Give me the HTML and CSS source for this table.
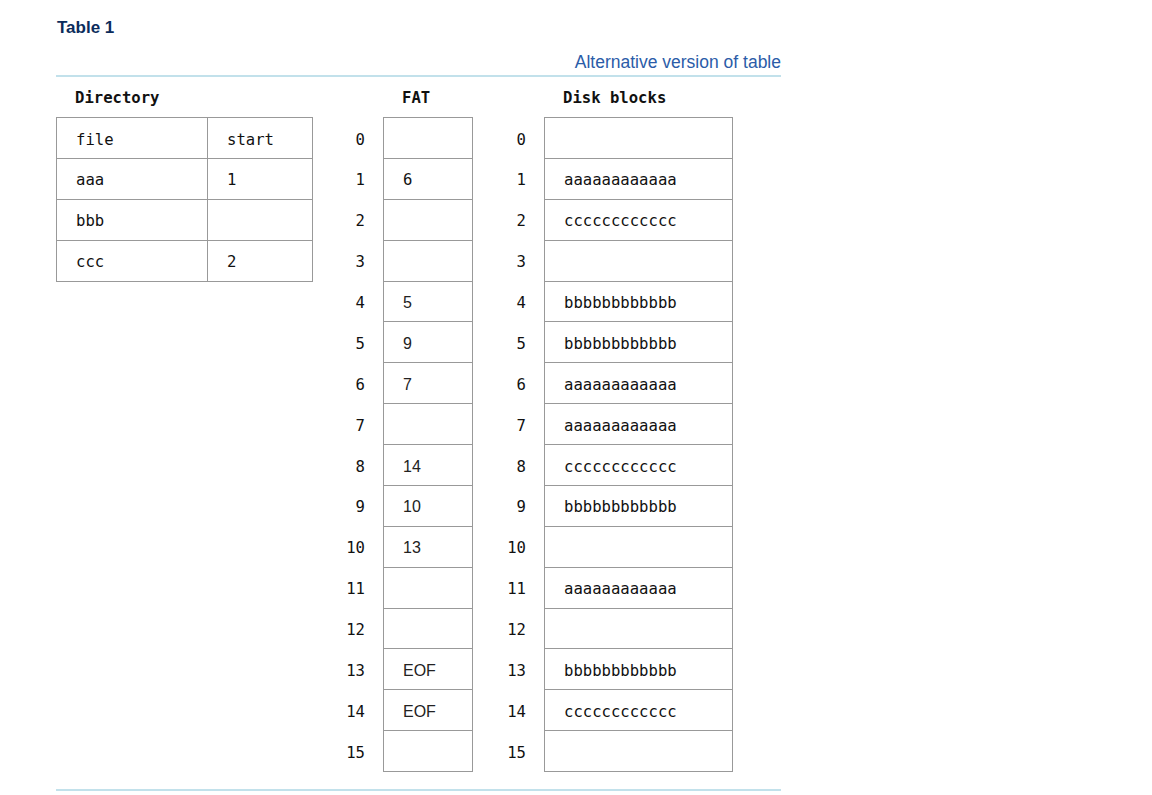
FILE: index.html
```html
<!DOCTYPE html>
<html lang="en">
<head>
<meta charset="utf-8">
<title>Table 1</title>
<link rel="stylesheet" href="styles.css">
</head>
<body>
<div class="wrap">
  <h2 class="title">Table 1</h2>
  <div class="alt"><a href="#" class="alt-link">Alternative version of table</a></div>
  <div class="figure">
    <div class="dir">
      <div class="hd span2">Directory</div>
      <div class="c b1 top first">file</div><div class="c b2 top">start</div>
      <div class="c b1 first">aaa</div><div class="c b2">1</div>
      <div class="c b1 first">bbb</div><div class="c b2"></div>
      <div class="c b1 first">ccc</div><div class="c b2">2</div>
    </div>
    <div class="fat">
      <div class="hd"></div><div class="hd">FAT</div>
      <div class="i top">0</div><div class="v top"></div>
      <div class="i">1</div><div class="v">6</div>
      <div class="i">2</div><div class="v"></div>
      <div class="i">3</div><div class="v"></div>
      <div class="i">4</div><div class="v sans">5</div>
      <div class="i">5</div><div class="v sans">9</div>
      <div class="i">6</div><div class="v sans">7</div>
      <div class="i">7</div><div class="v"></div>
      <div class="i">8</div><div class="v sans">14</div>
      <div class="i">9</div><div class="v sans">10</div>
      <div class="i">10</div><div class="v sans">13</div>
      <div class="i">11</div><div class="v"></div>
      <div class="i">12</div><div class="v"></div>
      <div class="i">13</div><div class="v sans">EOF</div>
      <div class="i">14</div><div class="v sans">EOF</div>
      <div class="i">15</div><div class="v"></div>
    </div>
    <div class="disk">
      <div class="hd"></div><div class="hd">Disk blocks</div>
      <div class="i top">0</div><div class="v top"></div>
      <div class="i">1</div><div class="v">aaaaaaaaaaaa</div>
      <div class="i">2</div><div class="v">cccccccccccc</div>
      <div class="i">3</div><div class="v"></div>
      <div class="i">4</div><div class="v">bbbbbbbbbbbb</div>
      <div class="i">5</div><div class="v">bbbbbbbbbbbb</div>
      <div class="i">6</div><div class="v">aaaaaaaaaaaa</div>
      <div class="i">7</div><div class="v">aaaaaaaaaaaa</div>
      <div class="i">8</div><div class="v">cccccccccccc</div>
      <div class="i">9</div><div class="v">bbbbbbbbbbbb</div>
      <div class="i">10</div><div class="v"></div>
      <div class="i">11</div><div class="v">aaaaaaaaaaaa</div>
      <div class="i">12</div><div class="v"></div>
      <div class="i">13</div><div class="v">bbbbbbbbbbbb</div>
      <div class="i">14</div><div class="v">cccccccccccc</div>
      <div class="i">15</div><div class="v"></div>
    </div>
  </div>
</div>
</body>
</html>
```

FILE: styles.css
```css
html, body {
  margin: 0;
  padding: 0;
  background: #ffffff;
}

body {
  font-family: "Liberation Sans", Arial, sans-serif;
  font-size: 16px;
  color: #222222;
}

.wrap {
  margin-left: 56px;
  width: 725px;
  padding-top: 19px;
}

.title {
  margin: 0;
  padding-left: 1px;
  font-size: 17px;
  line-height: 18px;
  font-weight: bold;
  color: #0b2c5c;
}

.alt {
  margin-top: 15px;
  text-align: right;
  font-size: 17.5px;
  line-height: 20px;
  padding-bottom: 3px;
  border-bottom: 2px solid #c2e1eb;
}

.alt-link {
  color: #2b5ca8;
  text-decoration: none;
}

.figure {
  display: flex;
  align-items: flex-start;
  padding-bottom: 17px;
  border-bottom: 2px solid #c2e1eb;
  font-family: "DejaVu Sans Mono", monospace;
  font-size: 15.6px;
  color: #111111;
}

.dir {
  display: grid;
  grid-template-columns: 152px 105px;
}

.fat {
  display: grid;
  grid-template-columns: 70px 90px;
}

.disk {
  display: grid;
  grid-template-columns: 71px 189px;
}

.hd {
  height: 40px;
  line-height: 42px;
  padding-left: 19px;
  font-weight: bold;
}

.span2 {
  grid-column: span 2;
}

.c,
.i,
.v {
  padding: 10.5px 0 5.5px 19px;
  line-height: 23.875px;
  height: 40.875px;
  box-sizing: border-box;
  border-bottom: 1px solid #999999;
}

.c {
  border-right: 1px solid #999999;
}

.c.first {
  border-left: 1px solid #999999;
}

.c.top,
.v.top,
.i.top {
  border-top: 1px solid #999999;
  height: 41.875px;
}

.i {
  border-color: transparent;
  padding-left: 0;
  padding-right: 18px;
  text-align: right;
}

.i.top {
  border-top-color: transparent;
}

.v {
  border-left: 1px solid #999999;
  border-right: 1px solid #999999;
}

.v.sans {
  padding-top: 9.5px;
  padding-bottom: 6.5px;
  font-family: "Liberation Sans", Arial, sans-serif;
  font-size: 16px;
  color: #222222;
}
```
